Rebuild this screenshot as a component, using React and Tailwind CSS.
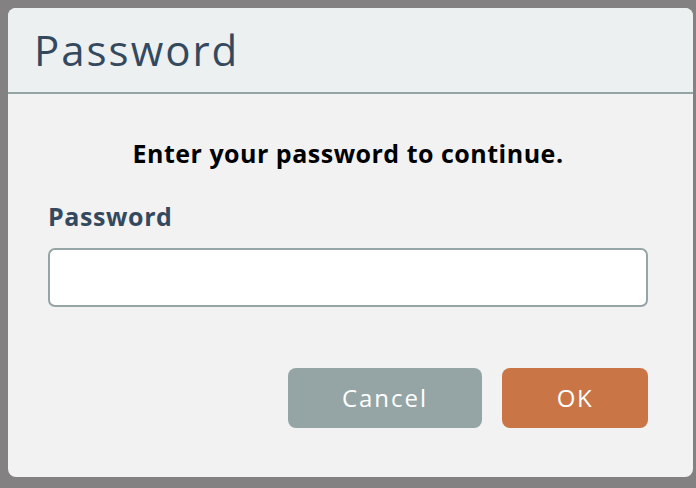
export default function App() {
  return (
    <div className="w-[696px] h-[488px] bg-[#838181] pt-[8px] pl-[8px] overflow-hidden" style={{ fontFamily: "'Open Sans', Lato, sans-serif" }}>
      <div className="w-[685px] h-[469px] rounded-[8px] overflow-hidden flex flex-col bg-[#f2f2f2]">
        <div className="h-[86px] shrink-0 bg-[#ecf0f1] border-b-2 border-[#95a5a6] flex items-center pl-[26px]">
          <h1 className="text-[42px] leading-none text-[#34495e] font-normal tracking-[2px]">Password</h1>
        </div>
        <div className="flex flex-col pl-[40px] pt-[44px] w-[640px]">
          <p className="text-[25px] leading-[30px] font-bold text-black text-center tracking-[0.5px]">Enter your password to continue.</p>
          <label className="mt-[33px] text-[25px] leading-[30px] font-bold text-[#34495e] tracking-[0.6px]">Password</label>
          <input type="password" className="mt-[17px] w-[600px] h-[59px] bg-white border-2 border-[#95a5a6] rounded-[7px] outline-none px-3" />
          <div className="mt-[61px] flex justify-end gap-[20px]">
            <button className="w-[194px] h-[60px] rounded-[8px] bg-[#95a5a6] text-white text-[24px] tracking-[2px]">Cancel</button>
            <button className="w-[146px] h-[60px] rounded-[8px] bg-[#c97546] text-white text-[24px] tracking-[1.5px]">OK</button>
          </div>
        </div>
      </div>
    </div>
  );
}
